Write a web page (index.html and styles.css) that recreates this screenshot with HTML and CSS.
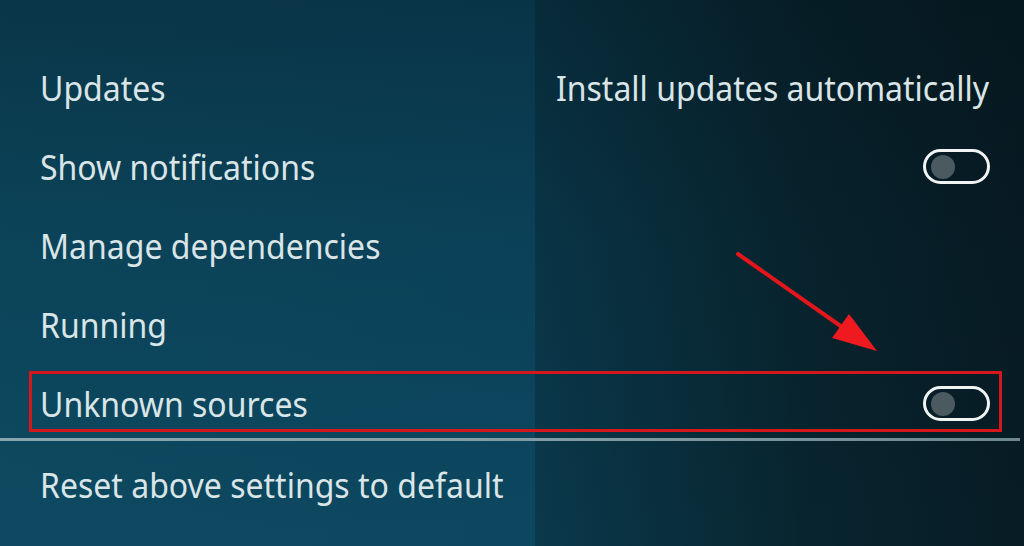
FILE: index.html
```html
<!DOCTYPE html>
<html>
<head>
<meta charset="utf-8">
<link rel="stylesheet" href="styles.css">
</head>
<body>
<div class="screen">
  <div class="list">
    <div class="row">
      <span class="label">Updates</span>
      <span class="value">Install updates automatically</span>
    </div>
    <div class="row">
      <span class="label">Show notifications</span>
      <span class="toggle"><span class="knob"></span></span>
    </div>
    <div class="row">
      <span class="label">Manage dependencies</span>
    </div>
    <div class="row">
      <span class="label">Running</span>
    </div>
    <div class="row highlight">
      <span class="label">Unknown sources</span>
      <span class="toggle"><span class="knob"></span></span>
    </div>
    <div class="separator"></div>
    <div class="row reset">
      <span class="label">Reset above settings to default</span>
    </div>
  </div>
  <svg class="arrow" width="1024" height="546" viewBox="0 0 1024 546">
    <line x1="738" y1="254" x2="842" y2="327" stroke="#e3161b" stroke-width="4" stroke-linecap="round"/>
    <polygon points="832,338 849,314 877,351" fill="#ee1a1f"/>
  </svg>
</div>
</body>
</html>
```
FILE: styles.css
```css
html, body {
  margin: 0;
  padding: 0;
}

body {
  width: 1024px;
  height: 546px;
  overflow: hidden;
  font-family: "Noto Sans", "Open Sans", sans-serif;
}

.screen {
  position: relative;
  width: 1024px;
  height: 546px;
  background:
    linear-gradient(to bottom, rgba(2, 12, 18, 0.32) 0%, rgba(2, 12, 18, 0.1) 45%, rgba(2, 12, 18, 0) 100%),
    linear-gradient(to right, #0d4a61 0px, #0c4760 535px, #0a394c 535px, #08252f 800px, #071c25 1024px);
}

.list {
  display: flex;
  flex-direction: column;
  padding-top: 48px;
}

.row {
  position: relative;
  height: 79px;
  display: flex;
  align-items: center;
  justify-content: space-between;
  padding: 0 34px 0 40px;
  color: #dae5e8;
  font-size: 32px;
  line-height: 40px;
}

.label,
.value {
  display: inline-block;
  transform: scaleY(1.07);
}

.value {
  margin-right: 1px;
}

.toggle {
  width: 56px;
  height: 29px;
  border: 3px solid #f2f4f4;
  border-radius: 20px;
  display: flex;
  align-items: center;
  padding-left: 5px;
  box-sizing: content-box;
}

.toggle .knob {
  width: 24px;
  height: 24px;
  border-radius: 50%;
  background: #4b5960;
}

.highlight::after {
  content: "";
  position: absolute;
  left: 29px;
  right: 22px;
  top: 7px;
  bottom: 11px;
  border: 3px solid #d5171c;
}

.separator {
  height: 3px;
  margin: -5px 4px 0 0;
  background: linear-gradient(to right, #89a6ae, #7f9aa2 60%, #6d878f);
}

.reset {
  height: 88px;
}

.arrow {
  position: absolute;
  left: 0;
  top: 0;
  pointer-events: none;
}
```
